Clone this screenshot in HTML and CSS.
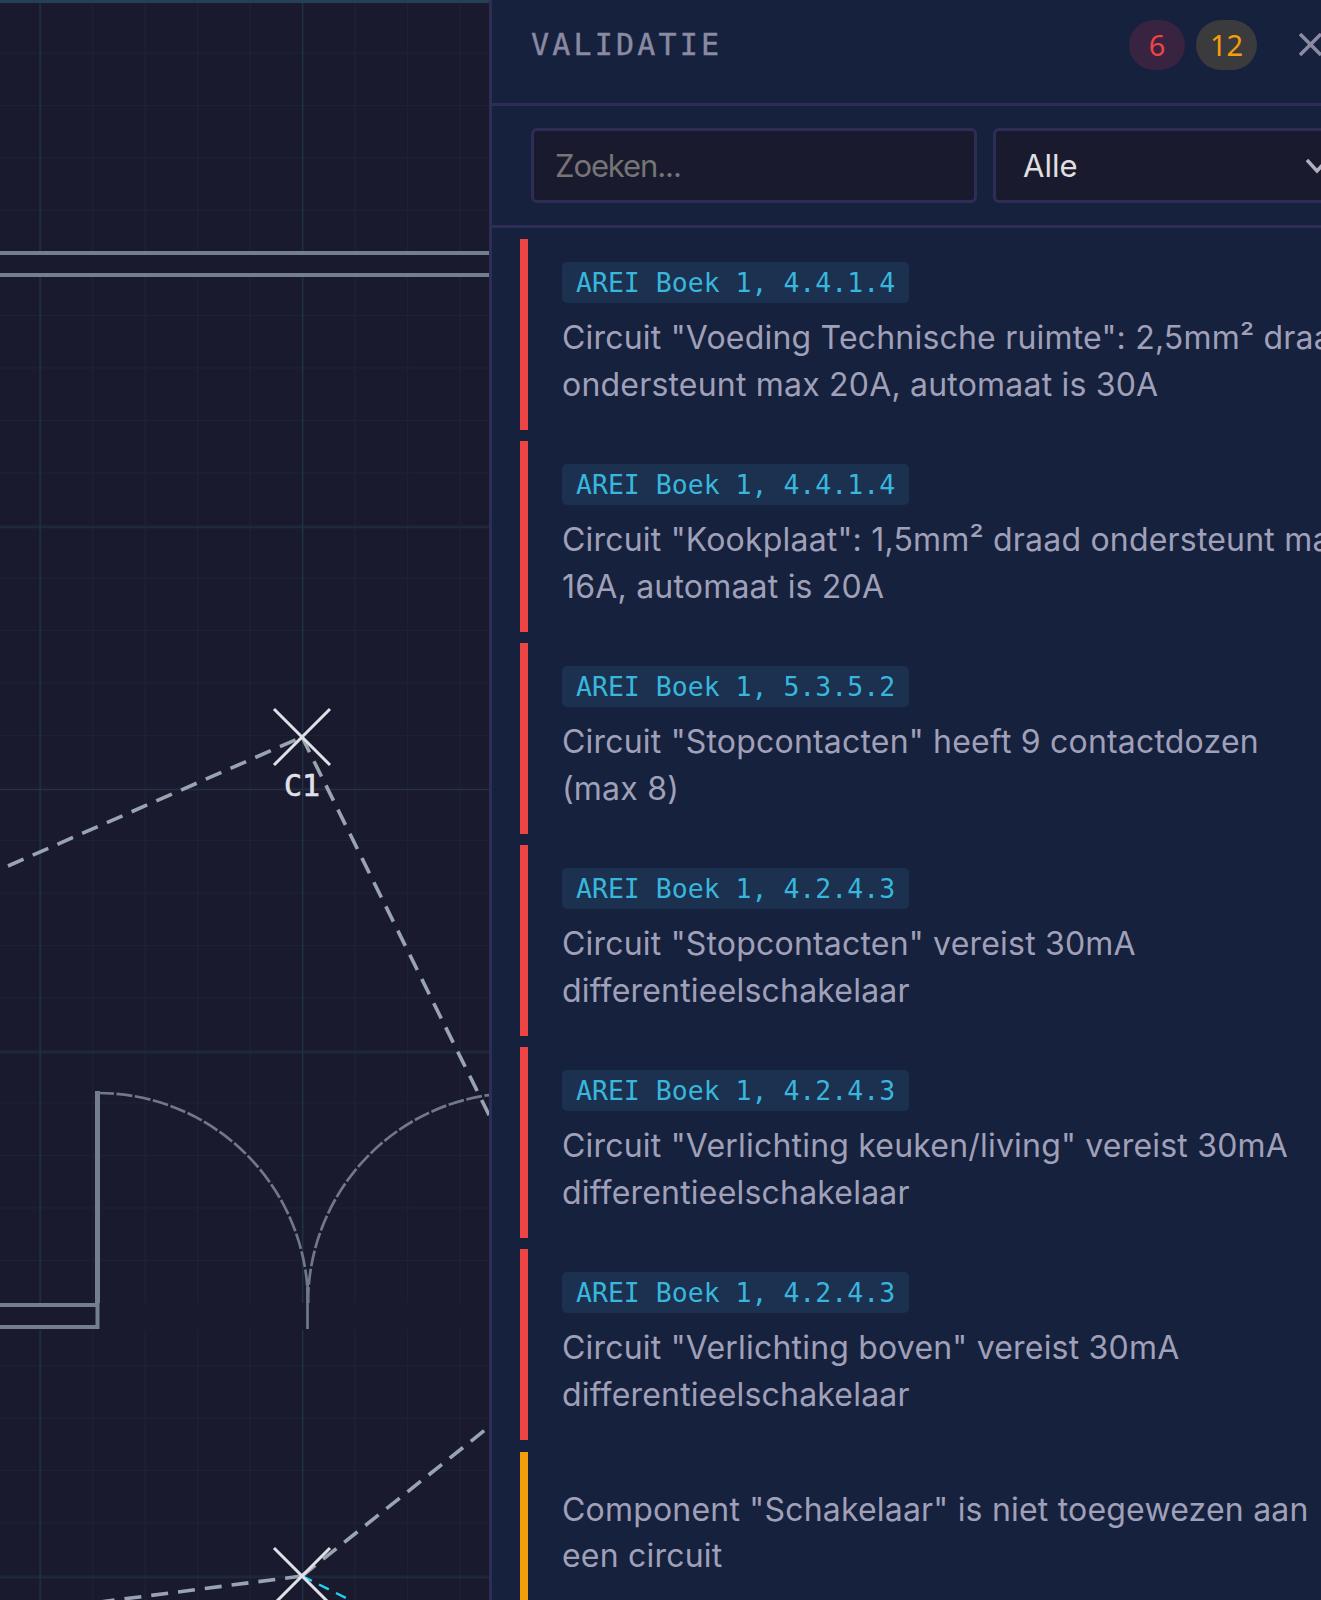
FILE: index.html
```html
<!DOCTYPE html>
<html lang="nl">
<head>
  <meta charset="UTF-8" />
  <title>Validatie</title>
  <link rel="stylesheet" href="styles.css">
</head>
<body>
  <div class="app">
    <div class="plan">
      <svg class="plan-svg" width="489" height="1600" viewBox="0 0 489 1600">
        <defs>
          <pattern id="minorGrid" x="-13" y="0" width="52.5" height="52.5" patternUnits="userSpaceOnUse">
            <path d="M0 0H52.5M0 0V52.5" class="grid-minor" />
          </pattern>
          <pattern id="majorGrid" x="39.5" y="1.5" width="262.5" height="262.5" patternUnits="userSpaceOnUse">
            <path d="M0 0H262.5M0 0V262.5" class="grid-major" />
          </pattern>
        </defs>
        <rect width="489" height="1600" fill="url(#minorGrid)" />
        <rect width="489" height="1600" fill="url(#majorGrid)" />
        <path d="M0 1.5H489" class="grid-top" />

        <!-- walls -->
        <rect x="0" y="251" width="489" height="26" class="gap" />
        <rect x="0" y="1303" width="489" height="27" class="gap" />
        <path d="M0 253H489M0 275H489" class="wall" />
        <path d="M97.5 1091V1303" class="wall-thick" />
        <path d="M0 1305H97.5V1327H0" class="wall" />

        <!-- doors -->
        <path d="M98 1093A210 210 0 0 1 308 1303" class="door" />
        <path d="M308 1303A210 210 0 0 1 518 1093" class="door" />
        <path d="M307.5 1282V1329" class="door-leaf" />

        <!-- wires -->
        <path d="M8 866L302 737" class="wire" />
        <path d="M302 737L495 1127" class="wire" />
        <path d="M302 1576L485 1430" class="wire" />
        <path d="M302 1576L100 1602" class="wire" />
        <path d="M302 1576L350 1600" class="wire-active" />

        <!-- components -->
        <path d="M274 709L330 765M330 709L274 765" class="marker" />
        <text x="302" y="795.5" text-anchor="middle" class="marker-label">C1</text>
        <path d="M274 1548L330 1604M330 1548L274 1604" class="marker" />
      </svg>
    </div>

    <aside class="panel">
      <header class="panel-head">
        <h2 class="panel-title">VALIDATIE</h2>
        <div class="badges">
          <span class="badge badge-error">6</span>
          <span class="badge badge-warning">12</span>
        </div>
        <button class="close">
          <svg width="23" height="23" viewBox="0 0 23 23"><path d="M1 1L22 22M22 1L1 22" /></svg>
        </button>
      </header>

      <div class="filters">
        <input class="search" type="text" placeholder="Zoeken..." />
        <div class="filter-select">
          <select>
            <option>Alle</option>
          </select>
          <svg class="chevron" width="24" height="16" viewBox="0 0 24 16"><path d="M2 2L12 13L22 2" /></svg>
        </div>
      </div>

      <div class="issues">
        <div class="issue issue-error">
          <span class="rule">AREI Boek 1, 4.4.1.4</span>
          <p>Circuit "Voeding Technische ruimte": 2,5mm² draad<br />ondersteunt max 20A, automaat is 30A</p>
        </div>
        <div class="issue issue-error">
          <span class="rule">AREI Boek 1, 4.4.1.4</span>
          <p>Circuit "Kookplaat": 1,5mm² draad ondersteunt max<br />16A, automaat is 20A</p>
        </div>
        <div class="issue issue-error">
          <span class="rule">AREI Boek 1, 5.3.5.2</span>
          <p>Circuit "Stopcontacten" heeft 9 contactdozen<br />(max 8)</p>
        </div>
        <div class="issue issue-error">
          <span class="rule">AREI Boek 1, 4.2.4.3</span>
          <p>Circuit "Stopcontacten" vereist 30mA<br />differentieelschakelaar</p>
        </div>
        <div class="issue issue-error">
          <span class="rule">AREI Boek 1, 4.2.4.3</span>
          <p>Circuit "Verlichting keuken/living" vereist 30mA<br />differentieelschakelaar</p>
        </div>
        <div class="issue issue-error">
          <span class="rule">AREI Boek 1, 4.2.4.3</span>
          <p>Circuit "Verlichting boven" vereist 30mA<br />differentieelschakelaar</p>
        </div>
        <div class="issue issue-warning">
          <p>Component "Schakelaar" is niet toegewezen aan<br />een circuit</p>
        </div>
      </div>
    </aside>
  </div>
</body>
</html>
```

FILE: styles.css
```css
html, body {
  margin: 0;
  height: 1600px;
  overflow: hidden;
  background-color: #1a1a2e;
}
.app {
  display: flex;
  width: 1400px;
  height: 1600px;
  font-family: "Inter", "Noto Sans", sans-serif;
}

/* floor plan */
.plan {
  width: 489px;
  flex-shrink: 0;
  background-color: #1a1a2e;
}
.plan-svg {
  display: block;
}
.grid-minor {
  fill: none;
  stroke: #1e2136;
  stroke-width: 2;
}
.grid-major {
  fill: none;
  stroke: #1f3247;
  stroke-width: 2.7;
}
.grid-top {
  fill: none;
  stroke: #263f55;
  stroke-width: 3;
}
.gap {
  fill: #1a1a2e;
}
.wall {
  fill: none;
  stroke: #747e90;
  stroke-width: 4;
}
.wall-thick {
  fill: none;
  stroke: #747e90;
  stroke-width: 5;
}
.door {
  fill: none;
  stroke: #70788a;
  stroke-width: 2.7;
  stroke-dasharray: 16 2.5;
}
.door-leaf {
  fill: none;
  stroke: #70788a;
  stroke-width: 2.7;
}
.wire {
  fill: none;
  stroke: #98a4b0;
  stroke-width: 3.6;
  stroke-dasharray: 17 10;
}
.wire-active {
  fill: none;
  stroke: #22d3ee;
  stroke-width: 2.4;
  stroke-dasharray: 11 8;
}
.marker {
  fill: none;
  stroke: #e0e0e8;
  stroke-width: 3;
}
.marker-label {
  fill: #e0e0e8;
  stroke: #e0e0e8;
  stroke-width: 0.6;
  font-family: "DejaVu Sans Mono", monospace;
  font-size: 30px;
}

/* side panel */
.panel {
  width: 900px;
  flex-shrink: 0;
  background-color: #16213e;
  border-left: 3px solid #2d2d55;
}
.panel-head {
  display: flex;
  align-items: center;
  height: 89px;
  padding: 0 0 14px 39px;
  border-bottom: 3px solid #2d2d55;
}
.panel-title {
  flex: 1;
  margin: 0;
  font-family: "DejaVu Sans Mono", monospace;
  font-size: 30px;
  font-weight: 400;
  letter-spacing: 3.2px;
  -webkit-text-stroke: 0.4px #8a8aa2;
  color: #8a8aa2;
}
.badges {
  display: flex;
  gap: 11px;
}
.badge {
  display: flex;
  align-items: center;
  justify-content: center;
  height: 50px;
  width: 56px;
  border-radius: 25px;
  font-family: "Noto Sans", sans-serif;
  font-size: 29px;
}
.badge-error {
  color: #ef4444;
  background-color: #382340;
}
.badge-warning {
  width: 61px;
  color: #f59e0b;
  background-color: #3b3b3e;
}
.close {
  display: flex;
  width: 23px;
  height: 23px;
  margin: 0 70px 0 42px;
  padding: 0;
  border: none;
  background: none;
}
.close path {
  fill: none;
  stroke: #8a8aa2;
  stroke-width: 3.6;
}

.filters {
  display: flex;
  gap: 16px;
  padding: 22px 39px;
  border-bottom: 3px solid #2d2d55;
}
.search, .filter-select select {
  height: 75px;
  box-sizing: border-box;
  border: 3px solid #2d2d55;
  border-radius: 6px;
  background-color: #1a1a2e;
  font-family: inherit;
  font-size: 31px;
  color: #e0e0e0;
}
.search {
  width: 446px;
  padding: 0 21px;
}
.search::placeholder {
  color: #757575;
  letter-spacing: -1.1px;
}
.filter-select {
  position: relative;
  width: 400px;
}
.filter-select select {
  width: 100%;
  padding: 0 27px;
  appearance: none;
}
.chevron {
  position: absolute;
  top: 30px;
  left: 312px;
}
.chevron path {
  fill: none;
  stroke: #b0b0c0;
  stroke-width: 3.4;
}

.issues {
  display: flex;
  flex-direction: column;
  gap: 11.1px;
  padding: 11px 28px;
}
.issue {
  height: 191px;
  box-sizing: border-box;
  padding: 23px 34px;
  border-left: 8px solid #ef4444;
}
.issue-warning {
  border-left-color: #f59e0b;
}
.rule {
  display: inline-block;
  height: 41px;
  padding: 0 14px;
  border-radius: 5px;
  background-color: #1c3050;
  font-family: "DejaVu Sans Mono", monospace;
  font-size: 26.5px;
  line-height: 41px;
  color: #38b6dc;
}
.issue p {
  margin: 12px 0 0;
  font-size: 32px;
  line-height: 46.6px;
  letter-spacing: 0.2px;
  white-space: nowrap;
  color: #a0a0b8;
}
```
